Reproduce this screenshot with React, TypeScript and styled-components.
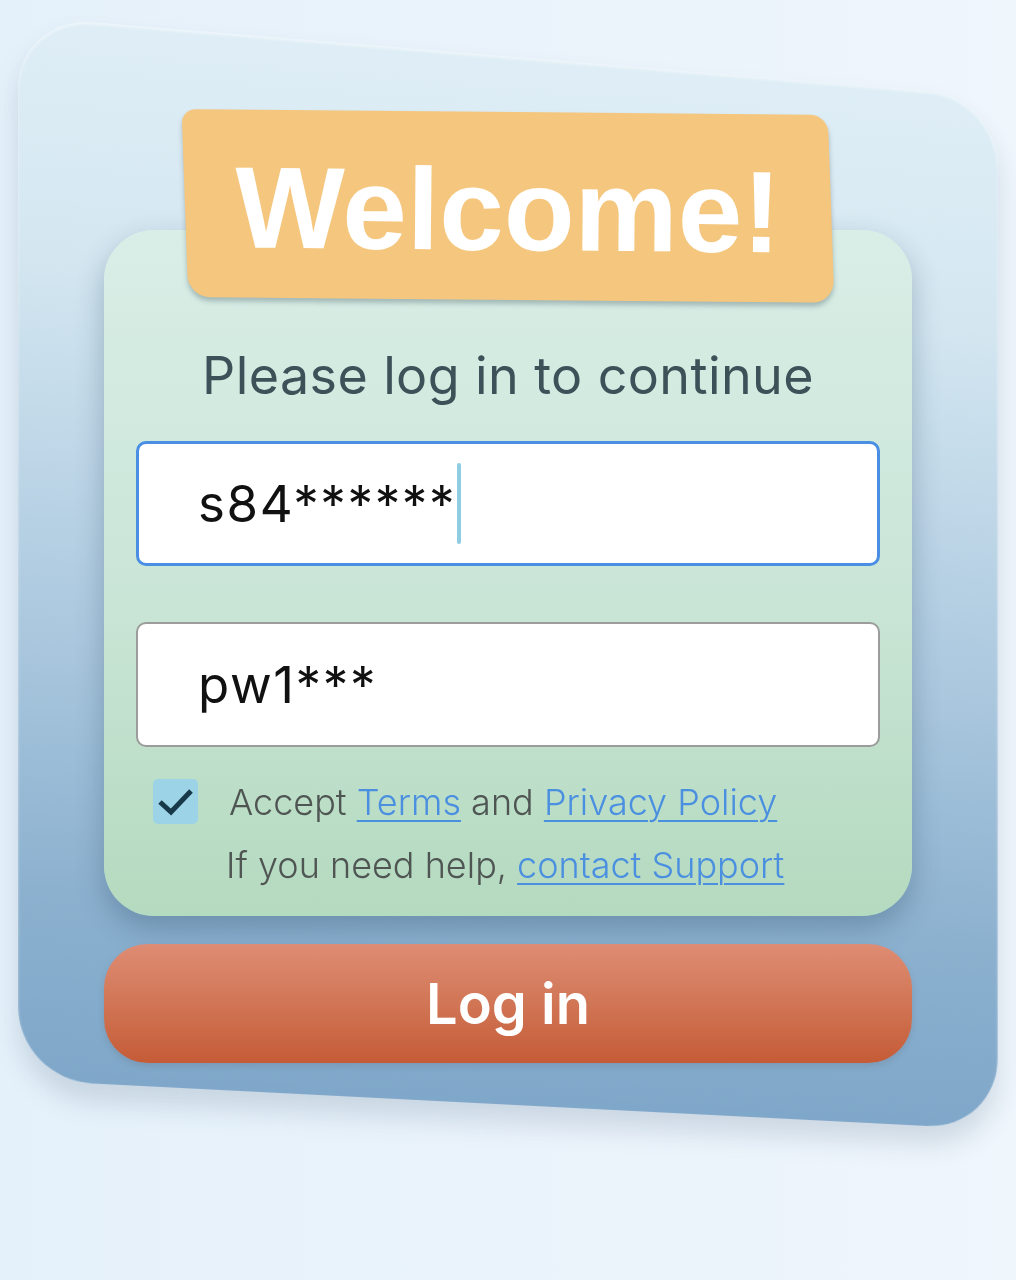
import React from 'react'
import styled, { createGlobalStyle } from 'styled-components'

const GlobalStyle = createGlobalStyle`
  html, body {
    margin: 0;
    padding: 0;
  }

  body {
    background: linear-gradient(90deg, #e5f1fa 0%, #eaf3fb 50%, #eff6fc 100%);
    font-family: Inter, 'Noto Sans', sans-serif;
    -webkit-font-smoothing: antialiased;
  }
`

const LoginScreen: React.FC = () => {
  return (
    <Page>
      <GlobalStyle />
      <Frame>
        <Banner>
          <BannerTitle>Welcome!</BannerTitle>
        </Banner>
        <Card>
          <Subtitle>Please log in to continue</Subtitle>
          <Field $focused>
            <FieldText>s84******</FieldText>
            <Caret />
          </Field>
          <Field $gap>
            <FieldText>pw1***</FieldText>
          </Field>
          <ConsentRow>
            <CheckBox>
              <svg width="45" height="45" viewBox="0 0 45 45" fill="none">
                <polyline points="7,23 18,33 38,12" stroke="#163848" strokeWidth="5" strokeLinejoin="miter" />
              </svg>
            </CheckBox>
            <SmallText>
              Accept <Link href="#">Terms</Link> and <Link href="#">Privacy Policy</Link>
            </SmallText>
          </ConsentRow>
          <HelpText>
            If you need help, <Link href="#">contact Support</Link>
          </HelpText>
        </Card>
        <LoginButton type="button">Log in</LoginButton>
      </Frame>
    </Page>
  )
}

const Page = styled.div`
  width: 1016px;
  height: 1280px;
  padding-top: 57px;
  box-sizing: border-box;
  overflow: hidden;
`

// the tilted blue panel is drawn by ::before so the form itself stays square
const Frame = styled.div`
  position: relative;
  margin: 0 18px;
  width: 980px;
  padding: 55px 86px 42px;
  box-sizing: border-box;
  display: flex;
  flex-direction: column;

  &::before {
    content: '';
    position: absolute;
    inset: 0;
    border-radius: 72px;
    background: linear-gradient(180deg, #dfeef6 0%, #d4e7f1 22%, #aecae0 55%, #8cb1cf 82%, #7fa7c9 100%);
    box-shadow: 0 18px 26px rgba(60, 90, 120, 0.18), inset 0 2px 3px rgba(255, 255, 255, 0.5);
    transform: translateX(7px) perspective(1000px) rotateY(1.7deg) skewY(3.8deg);
    z-index: 0;
  }
`

const Banner = styled.div`
  position: relative;
  z-index: 2;
  align-self: center;
  width: 646px;
  height: 188px;
  box-sizing: border-box;
  padding-top: 8px;
  display: flex;
  align-items: center;
  justify-content: center;
  background: #f5c67d;
  border-radius: 14px 18px 22px 22px;
  box-shadow: 0 4px 5px rgba(70, 90, 100, 0.35);
  transform: skewX(2.5deg) rotate(0.5deg);
`

const BannerTitle = styled.h1`
  margin: 0;
  font-family: 'Liberation Sans', Arial, sans-serif;
  font-weight: 700;
  font-size: 116px;
  line-height: 1;
  color: #ffffff;
  transform: skewX(-2.5deg);
`

const Card = styled.div`
  position: relative;
  z-index: 1;
  margin-top: -70px;
  padding: 115px 32px 30px 32px;
  border-radius: 50px;
  background: linear-gradient(180deg, #d9eee7 0%, #cbe6d8 50%, #b4dabf 100%);
  box-shadow: 0 12px 28px rgba(40, 70, 100, 0.32);
  display: flex;
  flex-direction: column;
`

const Subtitle = styled.div`
  font-size: 52px;
  line-height: 62px;
  font-weight: 400;
  letter-spacing: 0.4px;
  color: #3d5159;
  text-align: center;
  margin-bottom: 34px;
`

const Field = styled.div<{ $focused?: boolean; $gap?: boolean }>`
  height: 125px;
  box-sizing: border-box;
  margin-top: ${(p) => (p.$gap ? '56px' : '0')};
  padding-left: ${(p) => (p.$focused ? '59px' : '60px')};
  display: flex;
  align-items: center;
  background: #ffffff;
  border: ${(p) => (p.$focused ? '3px solid #4a8fe3' : '2px solid #9c9c9c')};
  border-radius: 10px;
`

const FieldText = styled.span`
  font-size: 51px;
  line-height: 1;
  color: #111111;
  letter-spacing: 1.6px;
`

const Caret = styled.span`
  width: 4px;
  height: 81px;
  margin-left: 1px;
  border-radius: 2px;
  background: #8ecde2;
`

const ConsentRow = styled.div`
  margin-top: 32px;
  padding-left: 17px;
  display: flex;
  align-items: center;
  gap: 31px;
`

const CheckBox = styled.div`
  width: 45px;
  height: 45px;
  flex-shrink: 0;
  border-radius: 5px;
  background: #9dd3e6;
  display: flex;
`

const SmallText = styled.div`
  font-size: 36px;
  line-height: 42px;
  font-weight: 300;
  color: #4f5553;
`

const HelpText = styled(SmallText)`
  margin-top: 20px;
  padding-left: 90px;
`

const Link = styled.a`
  color: #4a8fe0;
  text-decoration: underline;
  text-decoration-thickness: 2px;
  text-underline-offset: 5px;
`

const LoginButton = styled.button`
  position: relative;
  z-index: 1;
  margin-top: 28px;
  height: 119px;
  border: none;
  border-radius: 44px;
  background: linear-gradient(180deg, #df8c74 0%, #d27858 45%, #c55b37 100%);
  box-shadow: 0 3px 6px rgba(80, 60, 60, 0.15);
  font-family: Inter, 'Noto Sans', sans-serif;
  font-size: 56px;
  font-weight: 600;
  color: #ffffff;
  cursor: pointer;
`

export default LoginScreen
